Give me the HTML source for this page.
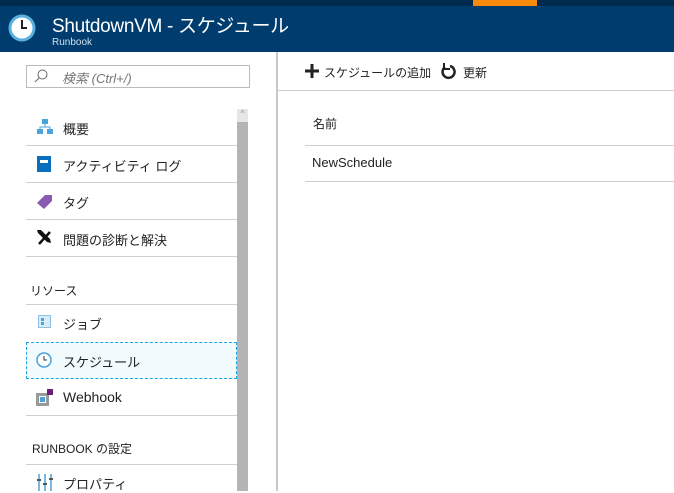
<!DOCTYPE html>
<html><head><meta charset="utf-8"><style>
*{margin:0;padding:0;box-sizing:border-box}
body{width:674px;height:491px;overflow:hidden;background:#fff;font-family:"Liberation Sans","Noto Sans CJK JP",sans-serif;position:relative;color:#222}
.a{position:absolute}
.t{font-size:13px;white-space:nowrap}
.ln{position:absolute;height:1px;background:#cfcfcf}
</style></head><body>
<div class="a" style="left:0;top:0;width:674px;height:6px;background:#002b4e"></div>
<div class="a" style="left:473px;top:0;width:64px;height:6px;background:#f7890b"></div>
<div class="a" style="left:0;top:6px;width:674px;height:46px;background:#003d6e"></div>
<svg class="a" style="left:8px;top:12px" width="28" height="32" viewBox="0 0 28 32"><circle cx="14" cy="16" r="13.5" fill="#5ab0de"/><circle cx="14" cy="16" r="10.5" fill="#fff"/><path d="M14 8v8h5" stroke="#222" stroke-width="2" fill="none"/></svg>
<div class="a" style="left:52px;top:11px;font-size:19px;color:#fff;white-space:nowrap;letter-spacing:-0.3px">ShutdownVM - スケジュール</div>
<div class="a" style="left:52px;top:37px;font-size:10px;color:#cfe0ee">Runbook</div>

<div class="a" style="left:26px;top:65px;width:224px;height:23px;border:1px solid #bbb"></div>
<svg class="a" style="left:33px;top:68px" width="16" height="16"><circle cx="9.5" cy="6.5" r="4.5" stroke="#666" fill="none"/><path d="M6 10l-4 4" stroke="#666"/></svg>
<div class="a t" style="left:62px;top:68px;color:#777;font-style:italic">検索 (Ctrl+/)</div>
<div class="a" style="left:276px;top:52px;width:2px;height:439px;background:#c8c8c8"></div>

<div class="a" style="left:237px;top:109px;width:11px;height:382px;background:#b4b4b4"></div>
<div class="a" style="left:237px;top:109px;width:11px;height:13px;background:#e6e6e6;font-size:8px;text-align:center;color:#888">^</div>

<svg class="a" style="left:37px;top:119px" width="16" height="16"><rect x="5" y="0" width="6" height="5" fill="#4aa3d9"/><rect x="0" y="10" width="6" height="5" fill="#4aa3d9"/><rect x="10" y="10" width="6" height="5" fill="#4aa3d9"/><path d="M8 5v3M3 10V8h10v2" stroke="#4aa3d9" fill="none"/></svg>
<div class="a t" style="left:63px;top:119px">概要</div>
<div class="ln" style="left:26px;top:145px;width:211px"></div>
<div class="a" style="left:37px;top:156px;width:14px;height:16px;background:#0a6ebd"></div><div class="a" style="left:40px;top:160px;width:8px;height:3px;background:#fff"></div>
<div class="a t" style="left:63px;top:156px">アクティビティ ログ</div>
<div class="ln" style="left:26px;top:182px;width:211px"></div>
<svg class="a" style="left:36px;top:193px" width="18" height="16"><path d="M1 10L9 2h7v6l-8 8z" fill="#8a5bb0"/></svg>
<div class="a t" style="left:63px;top:193px">タグ</div>
<div class="ln" style="left:26px;top:219px;width:211px"></div>
<svg class="a" style="left:36px;top:229px" width="16" height="16"><path d="M3 15L14 3" stroke="#111" stroke-width="2.5"/><path d="M1 1l4 0 9 9 1 4-4-1-9-9z" fill="#111"/></svg>
<div class="a t" style="left:63px;top:230px">問題の診断と解決</div>
<div class="ln" style="left:26px;top:256px;width:211px"></div>
<div class="a" style="left:30px;top:282px;font-size:12px">リソース</div>
<div class="ln" style="left:26px;top:304px;width:211px"></div>
<svg class="a" style="left:38px;top:315px" width="13" height="13"><rect x="0.5" y="0.5" width="12" height="12" fill="#dcecf7" stroke="#8cc2e6"/><rect x="3" y="3" width="3" height="3" fill="#4aa3d9"/><rect x="3" y="7" width="3" height="3" fill="#4aa3d9"/></svg>
<div class="a t" style="left:63px;top:314px">ジョブ</div>
<div class="a" style="left:26px;top:342px;width:211px;height:37px;background:#f1fafd;border:1px dashed #1aa3e0"></div>
<svg class="a" style="left:36px;top:352px" width="16" height="16"><circle cx="8" cy="8" r="7" fill="#fff" stroke="#4aa3d9" stroke-width="1.5"/><path d="M8 4v4h3" stroke="#333" fill="none"/></svg>
<div class="a t" style="left:63px;top:352px">スケジュール</div>
<svg class="a" style="left:36px;top:389px" width="17" height="17"><rect x="0" y="4" width="13" height="13" fill="#9a9a9a"/><rect x="3" y="7" width="7" height="7" fill="#fff"/><rect x="4" y="8" width="5" height="5" fill="#4aa3d9"/><rect x="11" y="0" width="6" height="6" fill="#68217a"/></svg>
<div class="a" style="left:63px;top:389px;font-size:14px">Webhook</div>
<div class="ln" style="left:26px;top:415px;width:211px"></div>
<div class="a" style="left:32px;top:440px;font-size:12px">RUNBOOK の設定</div>
<div class="ln" style="left:26px;top:464px;width:211px"></div>
<svg class="a" style="left:37px;top:474px" width="16" height="17"><path d="M2 0v17M8 0v17M14 0v17" stroke="#7ab8e0" stroke-width="2"/><path d="M0 6h4M6 10h4M12 5h4" stroke="#555" stroke-width="2"/></svg>
<div class="a t" style="left:63px;top:474px">プロパティ</div>

<svg class="a" style="left:304px;top:63px" width="16" height="16"><path d="M8 1v14M1 8h14" stroke="#222" stroke-width="3"/></svg>
<div class="a t" style="left:324px;top:64px;font-size:12px">スケジュールの追加</div>
<svg class="a" style="left:441px;top:62px" width="16" height="18"><path d="M4 5a6 6 0 1 0 5-1" stroke="#222" stroke-width="2.5" fill="none"/><path d="M3 1v6h6" stroke="#222" stroke-width="2" fill="none"/></svg>
<div class="a t" style="left:463px;top:64px;font-size:12px">更新</div>
<div class="ln" style="left:278px;top:90px;width:396px;background:#d0d0d0"></div>
<div class="a" style="left:313px;top:115px;font-size:12px">名前</div>
<div class="ln" style="left:305px;top:145px;width:369px"></div>
<div class="a t" style="left:312px;top:155px">NewSchedule</div>
<div class="ln" style="left:305px;top:181px;width:369px"></div>
</body></html>
